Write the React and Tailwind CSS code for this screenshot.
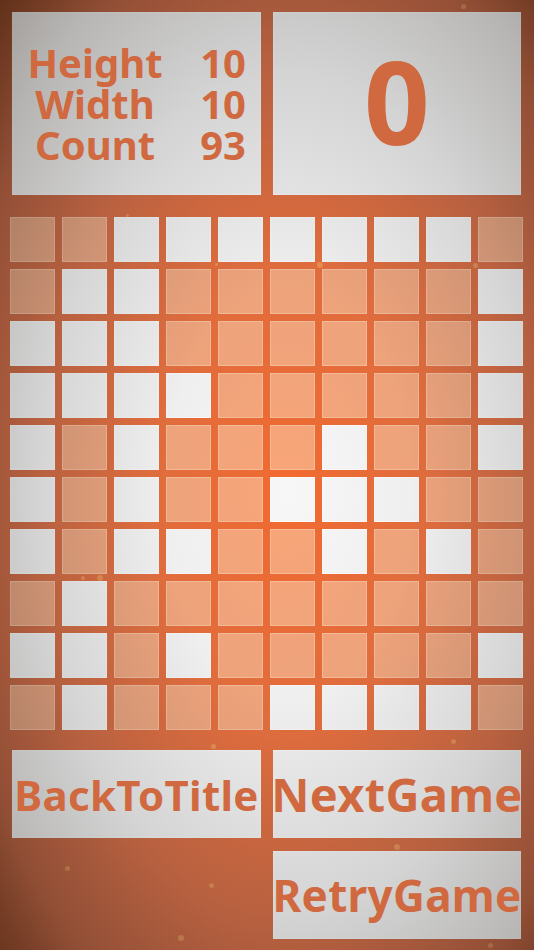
const board = [
  "OOWWWWWWWO",
  "OWWOOOOOOW",
  "WWWOOOOOOW",
  "WWWWOOOOOW",
  "WOWOOOWOOW",
  "WOWOOWWWOO",
  "WOWWOOWOWO",
  "OWOOOOOOOO",
  "WWOWOOOOOW",
  "OWOOOWWWWO",
];

const dots = [
  [320, 265, 6], [475, 265, 5], [213, 746, 5], [67, 868, 5], [211, 885, 5],
  [181, 938, 6], [463, 6, 5], [453, 741, 5], [397, 847, 6], [100, 578, 6],
  [83, 578, 4], [216, 264, 3], [127, 215, 3], [490, 945, 5],
];

function Panel({ className = "", children }) {
  return (
    <div className={"bg-[#f5f5f5] border border-[#fafafa] flex items-center justify-center text-[#d0693f] font-bold " + className}>
      {children}
    </div>
  );
}

export default function App() {
  return (
    <div
      className="relative w-[534px] h-[950px] overflow-hidden bg-[radial-gradient(ellipse_at_54%_52%,#f26a30_0%,#e8703f_35%,#d46c45_62%,#bd6140_82%,#8a3f1f_100%)]"
      style={{ fontFamily: '"Noto Sans", "Open Sans", sans-serif' }}
    >
      <div className="flex gap-[12px] px-[12px] pt-[12px]">
        <Panel className="w-[249px] h-[183px] justify-start">
          <div className="relative z-10 grid grid-cols-[164px_69px] text-[40px] leading-[41px]">
            <span className="text-center">Height</span>
            <span className="text-right">10</span>
            <span className="text-center">Width</span>
            <span className="text-right">10</span>
            <span className="text-center">Count</span>
            <span className="text-right">93</span>
          </div>
        </Panel>
        <Panel className="w-[248px] h-[183px]">
          <span className="relative z-10 text-[115px] leading-none -mt-[6px]">0</span>
        </Panel>
      </div>

      <div className="mt-[22px] px-[10px] grid grid-cols-10 gap-[7px] w-[533px]">
        {board.flatMap((row, r) =>
          row.split("").map((c, i) => (
            <div
              key={r + "-" + i}
              className={
                c === "W"
                  ? "h-[45px] bg-[#f7f7f7] border border-[#fcfcfc]"
                  : "h-[45px] bg-[#ffd6b4]/55 border border-[#ffe2c8]/40"
              }
            />
          ))
        )}
      </div>

      <div className="mt-[20px] px-[12px] grid grid-cols-[249px_248px] gap-x-[12px] gap-y-[13px]">
        <Panel className="h-[88px]">
          <span className="relative z-10 text-[42px] tracking-[0.3px]">BackToTitle</span>
        </Panel>
        <Panel className="h-[88px]">
          <span className="relative z-10 text-[47px] tracking-[0.3px]">NextGame</span>
        </Panel>
        <div />
        <Panel className="h-[88px]">
          <span className="relative z-10 text-[44px] tracking-[0.3px]">RetryGame</span>
        </Panel>
      </div>

      {dots.map(([x, y, s], i) => (
        <div
          key={i}
          className="absolute rounded-full bg-[#ffd27a]/35"
          style={{ left: x - s / 2, top: y - s / 2, width: s, height: s }}
        />
      ))}

      <div className="pointer-events-none absolute inset-0 bg-[radial-gradient(ellipse_at_54%_52%,rgba(40,40,40,0)_0%,rgba(40,40,40,0.04)_30%,rgba(40,40,40,0.16)_60%,rgba(40,35,30,0.3)_85%,rgba(40,25,15,0.45)_105%)]" />
    </div>
  );
}
